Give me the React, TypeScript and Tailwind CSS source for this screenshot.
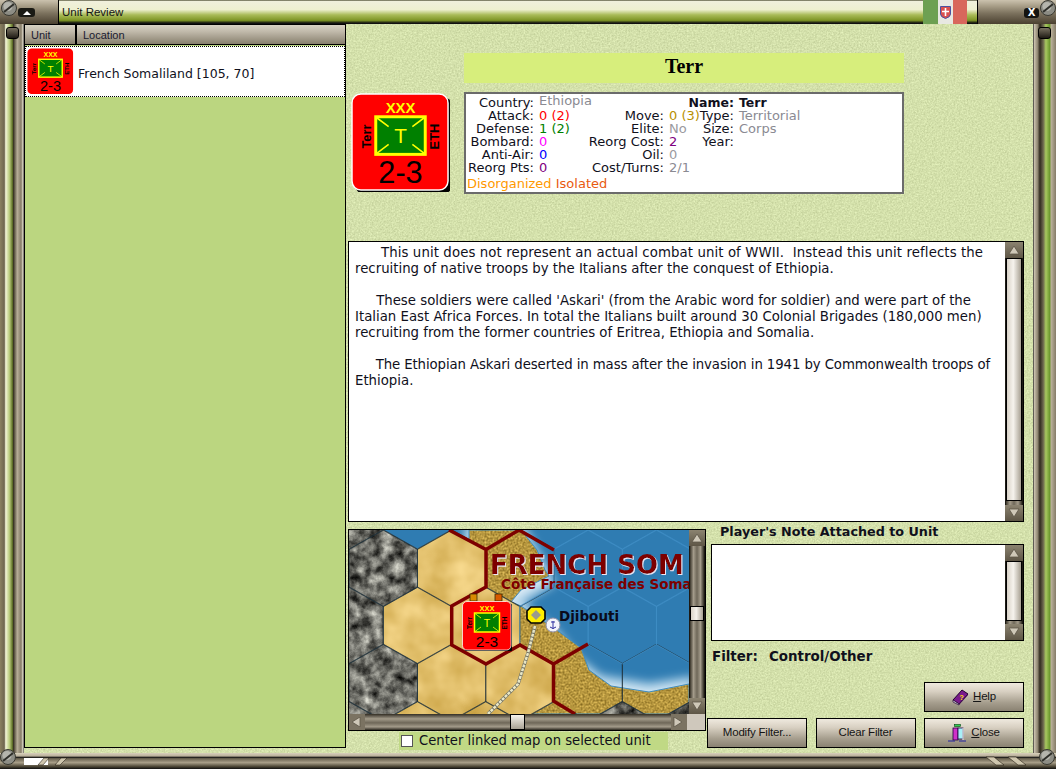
import React, { FC, ReactNode } from 'react';

const SANS = "font-['DejaVu_Sans','Liberation_Sans',sans-serif]";
const metal = 'bg-[linear-gradient(180deg,#efe9de_0%,#d8d0c2_30%,#a69e8e_70%,#8a8272_100%)]';
const capMetal = 'bg-[linear-gradient(180deg,#cbc2ae_0%,#a89e88_25%,#7c725e_55%,#4a4030_100%)]';

const Screw: FC = () => (
    <svg width="16" height="16" viewBox="0 0 16 16" className="shrink-0">
        <circle cx="8" cy="8" r="7.5" fill="#8d8d85" stroke="#3a3a32" />
        <circle cx="7" cy="6.5" r="4.5" fill="#b5b5ad" />
        <path d="M3 12 L13 4" stroke="#2f2f2a" strokeWidth="2" />
    </svg>
);

const UnitCounter: FC<{ size: number; border?: boolean }> = ({ size, border }) => (
    <svg width={size} height={size} viewBox="0 0 100 100" className="block">
        {border && <rect x="4" y="4" width="98" height="98" rx="9" fill="#000" />}
        <rect x="1" y="1" width="97" height="97" rx="9" fill="#ff0000" stroke={border ? '#fff' : 'none'} strokeWidth="1.5" />
        <text x="50" y="20" textAnchor="middle" fontFamily="Liberation Sans" fontWeight="700" fontSize="15" fill="#ffff00">XXX</text>
        <rect x="25" y="24" width="50" height="38" fill="#008000" stroke="#ffff00" strokeWidth="3" />
        <path d="M26 25 L38 34 M74 25 L62 34 M26 61 L38 52 M74 61 L62 52" stroke="#ffff00" strokeWidth="1.6" />
        <text x="50" y="51" textAnchor="middle" fontFamily="Liberation Sans" fontSize="21" fill="#ffff00">T</text>
        <text x="0" y="0" transform="translate(20 44) rotate(-90)" textAnchor="middle" fontFamily="Liberation Sans" fontWeight="700" fontSize="13" fill="#000">Terr</text>
        <text x="0" y="0" transform="translate(89 44) rotate(-90)" textAnchor="middle" fontFamily="Liberation Sans" fontWeight="700" fontSize="13" fill="#000">ETH</text>
        <text x="50" y="91" textAnchor="middle" fontFamily="Liberation Sans" fontSize="31" fill="#000">2-3</text>
    </svg>
);

const Arrow: FC<{ dir: 'up' | 'down' | 'left' | 'right' }> = ({ dir }) => {
    const points = { up: '1,9 6,1 11,9', down: '1,1 6,9 11,1', left: '9,0 1,5 9,10', right: '1,0 9,5 1,10' }[dir];
    return (
        <svg width="12" height="10" viewBox="0 0 12 10">
            <polygon points={points} fill="#cfc8b8" stroke="#5d5548" strokeWidth="0.8" />
        </svg>
    );
};

const VScroll: FC<{ thumbTop: number; thumbH: number; w?: string }> = ({ thumbTop, thumbH, w = 'w-[18px]' }) => (
    <div className={`${w} shrink-0 h-full flex flex-col bg-[#1d1a14]`}>
        <div className="h-[16px] shrink-0 flex items-center justify-center bg-[linear-gradient(180deg,#8b8370,#5e5646)]">
            <Arrow dir="up" />
        </div>
        <div className="flex-1 flex flex-col bg-[linear-gradient(90deg,#3a352a_0%,#a39b8a_25%,#6f6859_50%,#a39b8a_75%,#2e2a21_100%)] mx-[1px]">
            <div style={{ height: thumbTop }} />
            <div
                style={{ height: thumbH }}
                className="border border-black bg-[linear-gradient(90deg,#d9d3c8_0%,#f6f3ed_45%,#a8a193_100%)]"
            />
        </div>
        <div className="h-[16px] shrink-0 flex items-center justify-center bg-[linear-gradient(180deg,#8b8370,#5e5646)]">
            <Arrow dir="down" />
        </div>
    </div>
);

const Button: FC<{ children: ReactNode }> = ({ children }) => (
    <button
        className={`w-[100px] h-[30px] border border-black ${metal} flex items-center justify-center gap-[4px] text-[11.5px] text-[#141414] font-['Liberation_Sans',sans-serif] tracking-[-0.2px]`}
    >
        {children}
    </button>
);

const BookIcon: FC = () => (
    <svg width="17" height="17" viewBox="0 0 17 17">
        <path d="M1 11 L10 1 L16 5 L7 15 Z" fill="#7a1a8c" stroke="#200030" />
        <path d="M1 11 L1 13 L7 16 L7 15 Z" fill="#e8e4ef" stroke="#200030" strokeWidth="0.7" />
        <path d="M7 15 L7 16 L16 6 L16 5 Z" fill="#4a1058" />
        <text x="7.5" y="10.5" fontSize="7" fontWeight="700" fill="#ffe600" fontFamily="Liberation Sans">?</text>
    </svg>
);

const DoorIcon: FC = () => (
    <svg width="19" height="18" viewBox="0 0 19 18">
        <rect x="6.5" y="0.5" width="6" height="2" fill="#30d050" stroke="#004010" strokeWidth="0.6" />
        <rect x="5" y="4" width="5" height="12" fill="#d030c8" stroke="#200040" strokeWidth="0.8" />
        <rect x="10" y="4" width="5" height="11" fill="#a8f0f8" stroke="#200040" strokeWidth="0.8" />
        <path d="M15 4 V16" stroke="#fff" strokeWidth="1" />
        <path d="M0 17 H7 M11 17 H18" stroke="#2020a0" strokeWidth="1" />
    </svg>
);

const hexPoints = (cx: number, cy: number) =>
    [
        [cx, cy - 38.5],
        [cx + 34.2, cy - 19.2],
        [cx + 34.2, cy + 19.2],
        [cx, cy + 38.5],
        [cx - 34.2, cy + 19.2],
        [cx - 34.2, cy - 19.2],
    ]
        .map((p) => p.join(','))
        .join(' ');

const gridHexes: [number, number][] = [];
[-19, 38.2, 95.4, 152.6, 209.8].forEach((cy, row) => {
    const offset = row % 2 === 0 ? 0.1 : 34.3;
    for (let c = 0; c < 6; c++) gridHexes.push([offset + c * 68.3, cy]);
});

const COAST = 'M172 0 L188 20 L196 40 L200 46 L172 60 L162 72 L172 76 L205 98 L232 118 L240 140 L262 156 L300 162 L340 154 L340 184 L120 184 L120 0 Z';

const MapView: FC = () => (
    <svg width="340" height="184" viewBox="0 0 340 184" className="block shrink-0">
        <defs>
            <filter id="rock" x="0" y="0" width="340" height="184" filterUnits="userSpaceOnUse" colorInterpolationFilters="sRGB">
                <feTurbulence type="fractalNoise" baseFrequency="0.09" numOctaves="5" seed="4" />
                <feColorMatrix values="1.1 0 0 0 -0.12  1.1 0 0 0 -0.12  1.05 0 0 0 -0.12  0 0 0 0 1" />
                <feComposite in2="SourceAlpha" operator="in" />
            </filter>
            <filter id="grain" x="0" y="0" width="340" height="184" filterUnits="userSpaceOnUse" colorInterpolationFilters="sRGB">
                <feTurbulence type="fractalNoise" baseFrequency="0.5" numOctaves="3" seed="8" />
                <feColorMatrix values="0.55 0 0 0 0.44  0.5 0 0 0 0.34  0.35 0 0 0 0.07  0 0 0 0 1" />
                <feComposite in2="SourceAlpha" operator="in" />
            </filter>
            <filter id="sand" x="0" y="0" width="340" height="184" filterUnits="userSpaceOnUse" colorInterpolationFilters="sRGB">
                <feTurbulence type="fractalNoise" baseFrequency="0.03" numOctaves="3" seed="3" />
                <feColorMatrix values="0.25 0 0 0 0.76  0.3 0 0 0 0.6  0.4 0 0 0 0.22  0 0 0 0 1" />
                <feComposite in2="SourceAlpha" operator="in" />
            </filter>
            <filter id="soft">
                <feGaussianBlur stdDeviation="5" />
            </filter>
            <filter id="label" x="-5%" y="-20%" width="110%" height="140%">
                <feDropShadow dx="1" dy="1" stdDeviation="0" floodColor="#efe6f4" />
            </filter>
        </defs>
        <rect width="340" height="184" fill="#2f7cb2" />
        <path
            d="M172 0 L192 36 L200 52 L166 72 L205 104 L225 130 L250 150 L300 158 L340 152 L340 184 L120 184 L120 0 Z"
            fill="#e6f1f8"
            stroke="#b8d8ec"
            strokeWidth="10"
            filter="url(#soft)"
        />
        <path d={COAST} filter="url(#grain)" />
        <path d={COAST} fill="none" stroke="#3f8cc0" strokeWidth="1" />
        <g filter="url(#sand)">
            <polygon points={hexPoints(102.7, 38.2)} />
            <polygon points={hexPoints(68.5, 95.4)} />
            <polygon points={hexPoints(136.8, 95.4)} />
            <polygon points={hexPoints(102.7, 152.6)} />
            <polygon points={hexPoints(171, 152.6)} />
            <polygon points={hexPoints(68.5, 209.8)} />
            <polygon points={hexPoints(136.8, 209.8)} />
        </g>
        <g filter="url(#rock)">
            <polygon points={hexPoints(34.3, 38.2)} />
            <polygon points={hexPoints(0.1, 95.4)} />
            <polygon points={hexPoints(34.3, 152.6)} />
            <polygon points={hexPoints(0.1, -19)} />
            <polygon points={hexPoints(0.1, 209.8)} />
            <polygon points={hexPoints(273, 209.8)} />
            <polygon points={hexPoints(341, 209.8)} />
        </g>
        <g fill="none" stroke="#20303a" strokeWidth="0.7">
            {gridHexes.map(([cx, cy]) =>
                cx > 180 && cy < 150 ? null : <polygon key={`${cx}-${cy}`} points={hexPoints(cx, cy)} />
            )}
        </g>
        <g fill="none" stroke="#3f8dc4" strokeWidth="0.8">
            {gridHexes.map(([cx, cy]) =>
                cx > 180 && cy < 150 ? <polygon key={`b-${cx}-${cy}`} points={hexPoints(cx, cy)} /> : null
            )}
        </g>
        <path
            d="M100 0 L137 19.5 L170 0 M137 19.5 L137 57 L102.7 76 L102.7 115 L137 134 L171 115 L204.5 134 L204.5 171 L226 184 M204.5 134 L239 114 M170 0 L205 20"
            fill="none"
            stroke="#7d0000"
            strokeWidth="3.5"
        />
        <path d="M186 96 L179 123 L169 154 L139 184" fill="none" stroke="#6f6f62" strokeWidth="3.5" />
        <path d="M186 96 L179 123 L169 154 L139 184" fill="none" stroke="#e8e6c4" strokeWidth="2.5" strokeDasharray="3 1" />
        <g fill="#7d0000" fontFamily="DejaVu Sans" fontWeight="700">
            <text x="141" y="44" fontSize="26" filter="url(#label)">FRENCH SOM</text>
            <text x="152" y="59" fontSize="13.5">Côte Française des Soma</text>
        </g>
        <rect x="121" y="64" width="7" height="7" fill="#d98a00" stroke="#3a2a00" strokeWidth="0.8" />
        <rect x="146" y="64" width="7" height="7" fill="#d85a00" stroke="#3a2a00" strokeWidth="0.8" />
        <polygon points="182,77 192,77 196,81 196,89 192,93 182,93 178,89 178,81" fill="#ffee00" stroke="#000" strokeWidth="1.6" />
        <polygon points="187,80 192,85 187,90 182,85" fill="#9a9a8e" />
        <circle cx="204" cy="95" r="7" fill="#f4f4fa" stroke="#9090a8" />
        <path d="M204 91 V99 M201 97 Q204 100 207 97 M202 92 H206" stroke="#3030a0" strokeWidth="1" fill="none" />
        <text x="210" y="91" fontSize="13.5" fontWeight="700" fontFamily="DejaVu Sans" fill="#0a0a1a">Djibouti</text>
        <g transform="translate(113 71)">
            <UnitCounter size={50} border />
        </g>
    </svg>
);

const Stat: FC<{ label: string }> = ({ label }) => (
    <span className="flex justify-end whitespace-nowrap">{label}</span>
);

const FrameKnob: FC = () => (
    <div className="mx-auto mt-[3px] w-[13px] h-[12px] rounded-[3px] border border-black bg-[linear-gradient(180deg,#77705f,#1f1b14)]" />
);

const App: FC = () => {
    return (
        <div className={`w-[1056px] h-[769px] overflow-hidden flex flex-col bg-[#d6e0a9] ${SANS}`}>
            {/* title bar */}
            <div className="h-[24px] shrink-0 flex bg-[linear-gradient(180deg,#4a4a30_0%,#f0f0dc_6%,#eef0d0_40%,#a9bb58_62%,#7d9424_85%,#111_96%)]">
                <div className={`w-[59px] shrink-0 flex items-start gap-[1px] pl-[1px] ${capMetal} border-r border-black`}>
                    <Screw />
                    <div className="mt-[8px] w-[17px] h-[9px] rounded-[3px] bg-[#1a1a14] flex items-center justify-center">
                        <div className="w-0 h-0 border-x-[4px] border-x-transparent border-b-[4px] border-b-white" />
                    </div>
                </div>
                <div className="pl-[3px] pt-[5px] text-[11.5px] leading-[14px] text-[#141414] font-['Liberation_Sans',sans-serif]">Unit Review</div>
                <div className="ml-auto w-[44px] flex">
                    <div className="w-[15px] bg-[#6da052]" />
                    <div className="w-[15px] bg-[#e8e8e2] flex items-center justify-center">
                        <svg width="11" height="13" viewBox="0 0 11 13">
                            <path d="M0.5 0.5 H10.5 V8 Q10.5 11 5.5 12.5 Q0.5 11 0.5 8 Z" fill="#d85050" stroke="#4a50a0" />
                            <path d="M5.5 2 V10 M2 5.5 H9" stroke="#fff" strokeWidth="1.6" />
                        </svg>
                    </div>
                    <div className="w-[14px] bg-[#d8675c]" />
                </div>
                <div className={`ml-[10px] w-[79px] flex items-start pl-[46px] gap-[1px] border-l border-black ${capMetal}`}>
                    <div className="mt-[8px] w-[17px] h-[10px] rounded-[3px] bg-[#141410] text-white text-[10px] leading-[10px] text-center font-bold">X</div>
                    <Screw />
                </div>
            </div>

            <div className="flex-1 flex min-h-0">
                {/* left frame */}
                <div className="w-[24px] shrink-0 bg-[linear-gradient(90deg,#8a8060_0%,#6f6650_18%,#f4f6d8_24%,#b6c878_40%,#5f6f28_52%,#3a3424_56%,#b8ae98_72%,#857c68_88%,#e6e0d0_96%,#222_100%)]">
                    <FrameKnob />
                </div>

                <div className="relative flex-1 min-w-0 flex pb-[5px]">
                    {/* paper texture under the panels */}
                    <svg className="absolute inset-0 w-full h-full">
                        <filter id="paper" colorInterpolationFilters="sRGB">
                            <feTurbulence type="fractalNoise" baseFrequency="0.6" numOctaves="3" seed="2" />
                            <feColorMatrix values="0.2 0 0 0 0.73  0.2 0 0 0 0.78  0.2 0 0 0 0.57  0 0 0 0 1" />
                        </filter>
                        <rect width="100%" height="100%" filter="url(#paper)" />
                    </svg>

                    {/* unit list */}
                    <div className="relative w-[322px] shrink-0 flex flex-col border border-black bg-[#bbd680]">
                        <div className="h-[20px] shrink-0 flex text-[11px] text-[#1a1a30] font-['Liberation_Sans',sans-serif] border-b border-black bg-[linear-gradient(180deg,#d8d2c4_0%,#c0b9aa_35%,#88806e_100%)]">
                            <div className="w-[52px] pl-[6px] leading-[20px] border-r-2 border-black">Unit</div>
                            <div className="flex-1 pl-[6px] leading-[20px]">Location</div>
                        </div>
                        <div className="mt-[1px] h-[51px] flex items-center bg-white border border-dotted border-black pl-[1px]">
                            <UnitCounter size={47} />
                            <div className="ml-[4px] pt-[6px] text-[12.5px] text-[#10101c] whitespace-nowrap">French Somaliland [105, 70]</div>
                        </div>
                    </div>

                    {/* details */}
                    <div className="relative flex-1 min-w-0 flex flex-col">
                        <div className="mt-[29px] ml-[118px] w-[440px] h-[30px] bg-[#d7ee7c] text-center font-['Liberation_Serif',serif] font-bold text-[20px] leading-[27px] text-black">
                            Terr
                        </div>
                        <div className="mt-[9px] flex">
                            <div className="ml-[5px] mt-[1px] w-[113px] shrink-0">
                                <UnitCounter size={99} border />
                            </div>
                            <div className="w-[440px] h-[102px] bg-white border-2 border-[#6b6b6b] text-[13px] leading-[13px] text-[#10101c] pt-[2px]">
                                <div className="grid grid-cols-[68px_55px_75px_37px_33px_1fr]">
                                    <Stat label="Country:" />
                                    <span className="pl-[5px] text-[#8a8a92] -mt-[2px]">Ethiopia</span>
                                    <span />
                                    <span />
                                    <span className="flex justify-end font-bold text-[12.5px] whitespace-nowrap">Name:</span>
                                    <span className="pl-[5px] font-bold text-[12.5px]">Terr</span>

                                    <Stat label="Attack:" />
                                    <span className="pl-[5px] text-[#ff0000]">0 (2)</span>
                                    <Stat label="Move:" />
                                    <span className="pl-[5px] text-[#b89000] whitespace-nowrap">0 (3)</span>
                                    <Stat label="Type:" />
                                    <span className="pl-[5px] text-[#8a8a92]">Territorial</span>

                                    <Stat label="Defense:" />
                                    <span className="pl-[5px] text-[#008000]">1 (2)</span>
                                    <Stat label="Elite:" />
                                    <span className="pl-[5px] text-[#9a9aa0]">No</span>
                                    <Stat label="Size:" />
                                    <span className="pl-[5px] text-[#8a8a92]">Corps</span>

                                    <Stat label="Bombard:" />
                                    <span className="pl-[5px] text-[#ff00ff]">0</span>
                                    <Stat label="Reorg Cost:" />
                                    <span className="pl-[5px] text-[#800080]">2</span>
                                    <Stat label="Year:" />
                                    <span />

                                    <Stat label="Anti-Air:" />
                                    <span className="pl-[5px] text-[#0000ff]">0</span>
                                    <Stat label="Oil:" />
                                    <span className="pl-[5px] text-[#9a9aa0]">0</span>
                                    <span />
                                    <span />

                                    <Stat label="Reorg Pts:" />
                                    <span className="pl-[5px] text-[#800080]">0</span>
                                    <Stat label="Cost/Turns:" />
                                    <span className="pl-[5px] text-[#8a8a92]">2/1</span>
                                    <span />
                                    <span />
                                </div>
                                <div className="mt-[3px] pl-[1px]">
                                    <span className="text-[#ff9900]">Disorganized</span> <span className="text-[#e85a10]">Isolated</span>
                                </div>
                            </div>
                        </div>

                        {/* description */}
                        <div className="mt-[47px] ml-[2px] w-[676px] h-[281px] shrink-0 flex border border-black bg-white">
                            <div className="flex-1 pl-[6px] pr-[3px] pt-[3px] text-[13.3px] leading-[16px] text-[#10101c] whitespace-pre-wrap">
                                <span className="tracking-[0.1px]">{"      This unit does not represent an actual combat unit of WWII.  Instead this unit reflects the"}</span>
                                {" recruiting of native troops by the Italians after the conquest of Ethiopia.\n\n     These soldiers were called 'Askari' (from the Arabic word for soldier) and were part of the Italian East Africa Forces. In total the Italians built around 30 Colonial Brigades (180,000 men) recruiting from the former countries of Eritrea, Ethiopia and Somalia.\n\n"}
                                <span className="tracking-[-0.1px]">{"     The Ethiopian Askari deserted in mass after the invasion in 1941 by Commonwealth troops of"}</span>
                                {" Ethiopia."}
                            </div>
                            <VScroll thumbTop={0} thumbH={243} />
                        </div>

                        {/* map, note, buttons */}
                        <div className="flex ml-[2px] flex-1 min-h-0">
                            <div className="w-[359px] shrink-0 pt-[7px]">
                                <div className="w-[358px] h-[202px] border border-black bg-[#1d1a14] flex flex-col">
                                    <div className="h-[184px] flex shrink-0">
                                        <MapView />
                                        <VScroll thumbTop={60} thumbH={15} w="w-[16px]" />
                                    </div>
                                    <div className="flex-1 flex items-stretch">
                                        <div className="w-[16px] flex items-center justify-center bg-[#7b7362]"><Arrow dir="left" /></div>
                                        <div className="w-[306px] flex bg-[linear-gradient(180deg,#332e24_0%,#a39b8a_30%,#6f6859_55%,#a39b8a_80%,#2e2a21_100%)] pl-[145px]">
                                            <div className="w-[15px] border border-black bg-[linear-gradient(180deg,#f6f3ed,#a8a193)]" />
                                        </div>
                                        <div className="w-[16px] flex items-center justify-center bg-[#7b7362]"><Arrow dir="right" /></div>
                                        <div className="flex-1 bg-[#cfc8bc]" />
                                    </div>
                                </div>
                                <div className="ml-[51px] mt-[1px] w-[269px] h-[18px] flex items-center bg-[#c0d985] text-[13.2px] text-[#10101c] pl-[2px]">
                                    <div className="w-[12px] h-[12px] bg-white border border-[#555]" />
                                    <span className="ml-[6px] whitespace-nowrap">Center linked map on selected unit</span>
                                </div>
                            </div>
                            <div className="flex-1 min-w-0 flex flex-col pt-[2px] pr-[9px] pb-0">
                                <div className="pl-[13px] text-[12.75px] leading-[15px] font-bold text-[#10101c] whitespace-nowrap">Player's Note Attached to Unit</div>
                                <div className="mt-[5px] ml-[4px] h-[97px] shrink-0 flex border border-black bg-white">
                                    <div className="flex-1" />
                                    <VScroll thumbTop={0} thumbH={60} />
                                </div>
                                <div className="mt-[8px] ml-[5px] flex text-[13.4px] leading-[15px] font-bold text-[#10101c]">
                                    <span className="w-[57px]">Filter:</span>
                                    <span>Control/Other</span>
                                </div>
                                <div className="mt-auto flex justify-end">
                                    <Button><BookIcon /><span><u>H</u>elp</span></Button>
                                </div>
                                <div className="mt-[6px] flex justify-between">
                                    <Button>Modify Filter...</Button>
                                    <Button>Clear Filter</Button>
                                    <Button><DoorIcon /><span><u>C</u>lose</span></Button>
                                </div>
                            </div>
                        </div>
                    </div>
                </div>

                {/* right frame */}
                <div className="w-[23px] shrink-0 bg-[linear-gradient(90deg,#222_0%,#c8bfac_6%,#8f8672_20%,#302a1e_30%,#6f6a50_45%,#a8c860_56%,#6f9a30_72%,#b8ae98_80%,#857c68_100%)]">
                    <FrameKnob />
                </div>
            </div>

            {/* bottom frame */}
            <div className="h-[16px] shrink-0 flex items-stretch bg-[linear-gradient(180deg,#d8d0bc_0%,#b8ae98_20%,#111_26%,#6a6250_35%,#a89e88_60%,#4a4434_85%,#111_100%)]">
                <div className="ml-[0px] -mt-[4px]"><Screw /></div>
                <svg width="46" height="16" className="ml-[8px] shrink-0">
                    <rect x="0" y="5" width="24" height="7" fill="#fff" />
                    <path d="M14 12 L20 5 H25 L19 12 Z M31 12 L37 5 H43 L36 12 Z" fill="#cfc6ae" stroke="#2a2418" strokeWidth="0.6" />
                </svg>
                <svg width="46" height="16" className="ml-auto mr-[28px] shrink-0">
                    <path d="M0 4 L10 12 H18 L8 4 Z M22 4 L32 12 H40 L30 4 Z" fill="#cfc6ae" stroke="#2a2418" strokeWidth="0.6" />
                </svg>
                <div className="-mt-[4px] -ml-[21px] mr-[1px]"><Screw /></div>
            </div>
        </div>
    );
};

export default App;
